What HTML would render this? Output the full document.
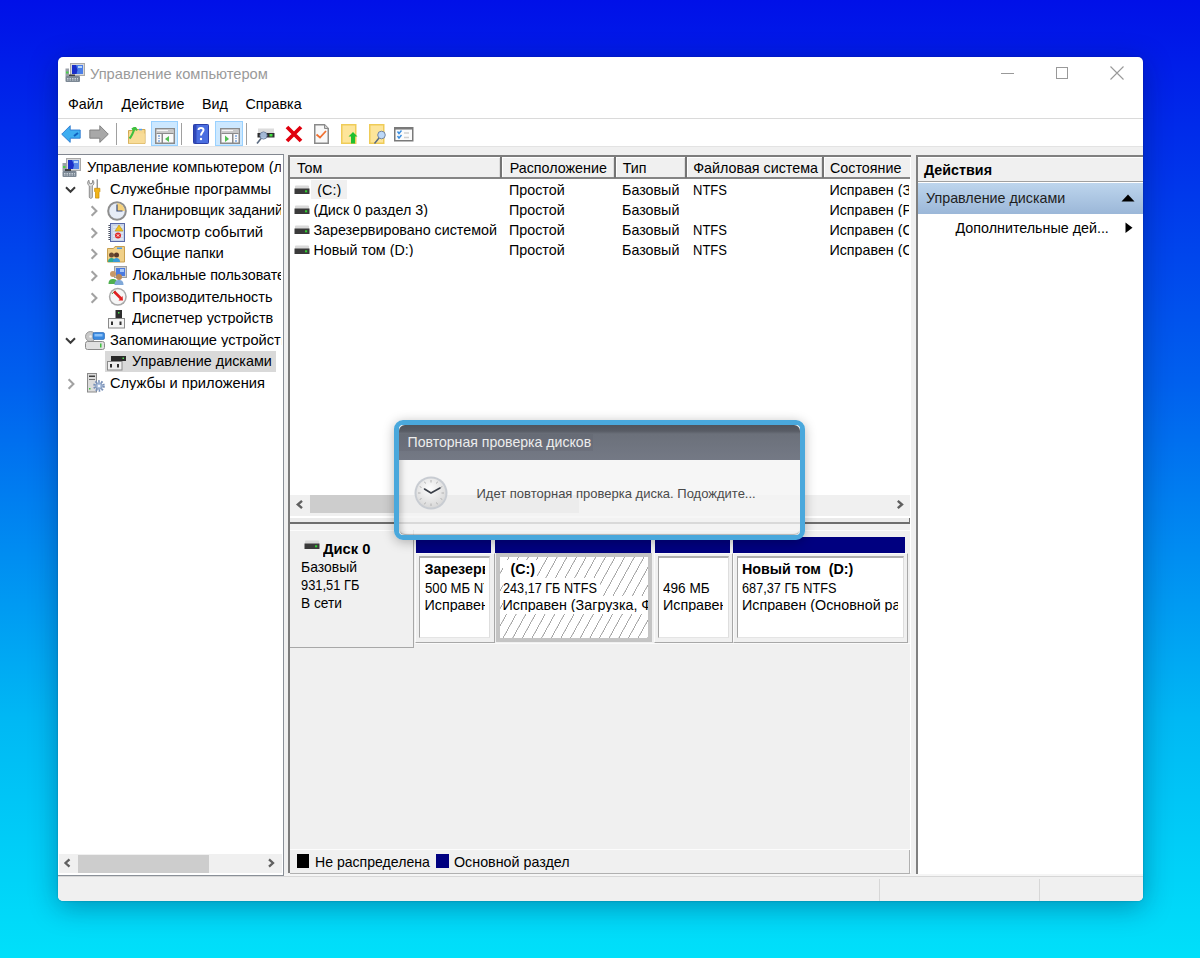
<!DOCTYPE html>
<html><head><meta charset="utf-8"><title>Управление компьютером</title>
<style>
html,body{margin:0;padding:0}
body{width:1200px;height:958px;position:relative;overflow:hidden;
background:linear-gradient(180deg,#0010e8 0%,#0060ee 40%,#00b8f4 75%,#00e0fa 100%);
font-family:"Liberation Sans",sans-serif;}
.a{position:absolute}
.t{position:absolute;white-space:nowrap}
</style></head><body>

<div class="a" style="left:58px;top:57px;width:1085px;height:844px;border-radius:5px;background:#fff;box-shadow:0 6px 28px rgba(0,20,60,.35),0 0 2px rgba(0,0,0,.25);overflow:hidden">
<div class="a" style="left:-58px;top:-57px;width:1200px;height:958px">
<div class="t" style="left:89.80px;top:66.70px;font-size:14.3px;line-height:14.3px;color:#9a9a9a;transform:scaleX(1.026);transform-origin:0 0;">Управление компьютером</div>
<div class="a" style="left:1001px;top:72.5px;width:12.5px;height:1px;background:#999;"></div>
<div class="a" style="left:1055.5px;top:66.5px;width:11.5px;height:11.5px;background:transparent;border:1px solid #999;box-sizing:border-box;width:12px;height:12px"></div>
<svg class="a" style="left:1109.5px;top:66px;" width="14" height="14" viewBox="0 0 14 14"><path d="M0.5 0.5L13.5 13.5M13.5 0.5L0.5 13.5" stroke="#999" stroke-width="1.1" fill="none"/></svg>
<div class="t" style="left:68.00px;top:97.40px;font-size:14.3px;line-height:14.3px;color:#000;">Файл</div>
<div class="t" style="left:121.50px;top:97.40px;font-size:14.3px;line-height:14.3px;color:#000;">Действие</div>
<div class="t" style="left:202.00px;top:97.40px;font-size:14.3px;line-height:14.3px;color:#000;">Вид</div>
<div class="t" style="left:245.50px;top:97.40px;font-size:14.3px;line-height:14.3px;color:#000;">Справка</div>
<div class="a" style="left:58px;top:118px;width:1085px;height:1px;background:#dadada;"></div>
<div class="a" style="left:58px;top:146px;width:1085px;height:1px;background:#e3e3e3;"></div>
<div class="a" style="left:58px;top:147px;width:1085px;height:729px;background:#f0f0f0;"></div>
<svg class="a" style="left:65px;top:63px;" width="20" height="20" viewBox="0 0 20 20">
<rect x="5.5" y="0.5" width="14" height="12" fill="#d8d8d8" stroke="#aaaaaa"/>
<rect x="7" y="2" width="11" height="9" fill="#4a7ee8"/>
<path d="M7 2h4l1.5 5l-1 4H7z" fill="#1a2fc8"/>
<rect x="13" y="3" width="4" height="2" fill="#b8d4f8"/>
<rect x="0.5" y="5.5" width="3.5" height="8" fill="#9aa0a8"/>
<rect x="1" y="8.5" width="2.5" height="2" fill="#4ad04a"/>
<rect x="4" y="11.5" width="6" height="2" fill="#404040"/>
<rect x="0.5" y="13" width="14.5" height="6" rx="1" fill="#7c8894"/>
<path d="M2 15.5h11M2 17h11" stroke="#c8d0d8" stroke-width="1" stroke-dasharray="1.5 1"/>
</svg>
<div class="a" style="left:150.5px;top:120.75px;width:27.5px;height:25px;background:#cce8ff;border:1px solid #99d1ff;box-sizing:border-box"></div>
<div class="a" style="left:215.25px;top:120.75px;width:27.5px;height:25px;background:#cce8ff;border:1px solid #99d1ff;box-sizing:border-box"></div>
<div class="a" style="left:116px;top:123px;width:1.2px;height:21.5px;background:#a0a0a0;"></div>
<div class="a" style="left:181px;top:123px;width:1.2px;height:21.5px;background:#a0a0a0;"></div>
<div class="a" style="left:245.5px;top:123px;width:1.2px;height:21.5px;background:#a0a0a0;"></div>
<svg class="a" style="left:61.2px;top:125px;" width="20" height="18" viewBox="0 0 20 18">
<path d="M0.7 9.2L9.2 0.7V5h10v8.2h-10v4.2Z" fill="#3eaef0" stroke="#2a78d0" stroke-width="0.9" stroke-linejoin="round"/>
<path d="M13 11l4-3" stroke="#1060c0" stroke-width="2"/>
</svg>
<svg class="a" style="left:89px;top:125px;" width="20" height="18" viewBox="0 0 20 18">
<path d="M19.3 9.2L10.8 0.7V5H0.8v8.2h10v4.2Z" fill="#a8a8a8" stroke="#7a7a7a" stroke-width="0.9" stroke-linejoin="round"/>
</svg>
<svg class="a" style="left:127.8px;top:126.5px;" width="18" height="17" viewBox="0 0 18 17">
<path d="M0.5 3.5h6l1-1h9.5v14h-16.5z" fill="#f6d890" stroke="#d0a850"/>
<rect x="0.8" y="6.5" width="16" height="10" fill="#f8dc98"/>
<path d="M1.5 11.5C4 9 5 6 6.5 1.5M4 2.5L7 0.5L9 3.5" stroke="#40c040" stroke-width="2.2" fill="none" stroke-linejoin="round"/>
<rect x="11" y="1.8" width="3" height="1.5" fill="#50a0f0"/>
</svg>
<svg class="a" style="left:155px;top:127.5px;" width="20" height="16" viewBox="0 0 20 16">
<rect x="0.75" y="0.75" width="18.5" height="14.5" fill="#fafafa" stroke="#8a8a8a" stroke-width="1.5"/>
<rect x="1.5" y="1.5" width="17" height="3.5" fill="#c8c8c8"/>
<path d="M2 2.6h11" stroke="#fff" stroke-width="0.9"/>
<rect x="1.5" y="5" width="17" height="1" fill="#8a8a8a"/>
<rect x="6.5" y="5" width="1.5" height="10" fill="#8a8a8a"/>
<rect x="3" y="7.5" width="2" height="1" fill="#3a7ad0"/><rect x="3" y="10" width="2" height="1" fill="#a0b8d8"/><rect x="3" y="12.5" width="2" height="1" fill="#3a7ad0"/>
<path d="M14 8L10 11L14 14Z" fill="#50c050"/>
</svg>
<svg class="a" style="left:192.5px;top:124px;" width="16" height="20" viewBox="0 0 16 20">
<rect x="0.5" y="0.5" width="15" height="19" rx="0.8" fill="#4a6ee0" stroke="#2a3ea8"/>
<rect x="1" y="1" width="2.5" height="18" fill="#3048b8"/>
<path d="M5.5 6C5.5 3.3 10.5 3.3 10.5 6C10.5 8 8 8.5 8 11.5" stroke="#fff" stroke-width="2" fill="none"/>
<circle cx="8" cy="15" r="1.2" fill="#fff"/>
</svg>
<svg class="a" style="left:220px;top:127.5px;" width="20" height="16" viewBox="0 0 20 16">
<rect x="0.75" y="0.75" width="18.5" height="14.5" fill="#fafafa" stroke="#8a8a8a" stroke-width="1.5"/>
<rect x="1.5" y="1.5" width="17" height="3.5" fill="#c8c8c8"/>
<path d="M2 2.6h11" stroke="#fff" stroke-width="0.9"/>
<rect x="1.5" y="5" width="17" height="1" fill="#8a8a8a"/>
<rect x="12" y="5" width="1.5" height="10" fill="#8a8a8a"/>
<rect x="15" y="7.5" width="2" height="1" fill="#3a7ad0"/><rect x="15" y="10" width="2" height="1" fill="#a0b8d8"/><rect x="15" y="12.5" width="2" height="1" fill="#3a7ad0"/>
<path d="M5 7.5L9 11L5 14Z" fill="#50c050"/>
</svg>
<svg class="a" style="left:256px;top:127.5px;" width="20" height="17" viewBox="0 0 20 17">
<rect x="2" y="0.5" width="16" height="4.5" fill="#dcdcdc"/>
<rect x="1.5" y="5" width="17" height="4.5" fill="#2e2e2e"/>
<rect x="13.5" y="6" width="3" height="2.5" fill="#40e040"/>
<circle cx="7.5" cy="7.5" r="3.6" fill="#b0c8e8" fill-opacity="0.9" stroke="#6a7a98" stroke-width="0.9"/>
<path d="M5 10.5L1 15.5" stroke="#5a6a80" stroke-width="1.6"/>
</svg>
<svg class="a" style="left:284.5px;top:125px;" width="18" height="18" viewBox="0 0 18 18">
<path d="M2 2L16 16M16 2L2 16" stroke="#e0000e" stroke-width="3.8"/>
</svg>
<svg class="a" style="left:314px;top:124px;" width="15" height="20" viewBox="0 0 15 20">
<path d="M0.75 0.75H10.5L14.25 4.5V19.25H0.75Z" fill="#f8f8f8" stroke="#8a8a8a" stroke-width="1.5"/>
<path d="M10.5 0.75V4.5H14.25" fill="#d0d0d0" stroke="#8a8a8a" stroke-width="1"/>
<path d="M2.5 10.5L6 13.5L12 7" stroke="#f07030" stroke-width="1.8" fill="none"/>
</svg>
<svg class="a" style="left:341px;top:124px;" width="17" height="20" viewBox="0 0 17 20">
<rect x="0.75" y="0.75" width="14" height="18.5" fill="#fde59a" stroke="#efcc58" stroke-width="1.5"/>
<path d="M12 8L16.5 12.5H14v7H10v-7H7.5Z" fill="#20c030"/>
</svg>
<svg class="a" style="left:369px;top:124px;" width="18" height="20" viewBox="0 0 18 20">
<rect x="0.75" y="0.75" width="14" height="18.5" fill="#fde59a" stroke="#efcc58" stroke-width="1.5"/>
<circle cx="12.5" cy="11" r="3.8" fill="#bcd8f8" stroke="#6a7a98" stroke-width="0.9"/>
<path d="M10 14L5.5 19.5" stroke="#5a6a80" stroke-width="1.5"/>
</svg>
<svg class="a" style="left:394.25px;top:126.5px;" width="20" height="15" viewBox="0 0 20 15">
<rect x="0.75" y="0.75" width="18" height="13" fill="#fbfbfb" stroke="#7a7a7a" stroke-width="1.5"/>
<rect x="0.75" y="0.75" width="18" height="1.8" fill="#7a7a7a"/>
<path d="M3.5 4.5L5 6.5L7.5 3.5M3.5 9L5 11L7.5 8" stroke="#3a8ee0" stroke-width="1.4" fill="none"/>
<path d="M10 6h5M10 10.5h5" stroke="#cfcfcf" stroke-width="1.3"/>
</svg>
<div class="a" style="left:58px;top:154px;width:226px;height:721.5px;background:#fff;border-top:1px solid #828790;border-right:1px solid #8a9098;border-bottom:1px solid #8a9098;box-sizing:border-box;"></div>
<div class="a" style="left:288px;top:154.5px;width:623px;height:718.5px;background:#fff;border-left:2px solid #7c7c7c;border-top:2px solid #7c7c7c;box-sizing:border-box;"></div>
<div class="a" style="left:916px;top:155px;width:227px;height:719px;background:#fff;border-left:2px solid #808080;border-top:2px solid #808080;box-sizing:border-box;"></div>
<div class="a" style="left:104.8px;top:351.4px;width:171.4px;height:21px;background:#d9d9d9;"></div>
<div class="t" style="left:87.00px;top:160.20px;font-size:14.3px;line-height:14.3px;color:#000;width:189.26829268292684px;overflow:hidden;transform:scaleX(1.025);transform-origin:0 0;">Управление компьютером (локальным)</div>
<div class="t" style="left:110.00px;top:181.77px;font-size:14.3px;line-height:14.3px;color:#000;width:165.85838991270612px;overflow:hidden;transform:scaleX(1.031);transform-origin:0 0;">Служебные программы</div>
<svg class="a" style="left:65.0px;top:186.26999999999998px;" width="12" height="8" viewBox="0 0 12 8"><path d="M1 1.3L5.5 5.8L10 1.3" stroke="#3a3a3a" stroke-width="2" fill="none"/></svg>
<div class="t" style="left:132.40px;top:203.34px;font-size:14.3px;line-height:14.3px;color:#000;width:148.6px;overflow:hidden;transform:scaleX(1.0);transform-origin:0 0;">Планировщик заданий</div>
<svg class="a" style="left:89.5px;top:205.33999999999997px;" width="9" height="12" viewBox="0 0 9 12"><path d="M1.6 1.2L6.4 6L1.6 10.8" stroke="#a2a2a2" stroke-width="2.1" fill="none"/></svg>
<div class="t" style="left:132.40px;top:224.91px;font-size:14.3px;line-height:14.3px;color:#000;width:142.20095693779905px;overflow:hidden;transform:scaleX(1.045);transform-origin:0 0;">Просмотр событий</div>
<svg class="a" style="left:89.5px;top:226.91px;" width="9" height="12" viewBox="0 0 9 12"><path d="M1.6 1.2L6.4 6L1.6 10.8" stroke="#a2a2a2" stroke-width="2.1" fill="none"/></svg>
<div class="t" style="left:132.40px;top:246.48px;font-size:14.3px;line-height:14.3px;color:#000;width:143.57487922705315px;overflow:hidden;transform:scaleX(1.035);transform-origin:0 0;">Общие папки</div>
<svg class="a" style="left:89.5px;top:248.48000000000002px;" width="9" height="12" viewBox="0 0 9 12"><path d="M1.6 1.2L6.4 6L1.6 10.8" stroke="#a2a2a2" stroke-width="2.1" fill="none"/></svg>
<div class="t" style="left:132.40px;top:268.05px;font-size:14.3px;line-height:14.3px;color:#000;width:148.6px;overflow:hidden;transform:scaleX(1.0);transform-origin:0 0;">Локальные пользователи и группы</div>
<svg class="a" style="left:89.5px;top:270.04999999999995px;" width="9" height="12" viewBox="0 0 9 12"><path d="M1.6 1.2L6.4 6L1.6 10.8" stroke="#a2a2a2" stroke-width="2.1" fill="none"/></svg>
<div class="t" style="left:132.40px;top:289.62px;font-size:14.3px;line-height:14.3px;color:#000;width:146.83794466403162px;overflow:hidden;transform:scaleX(1.012);transform-origin:0 0;">Производительность</div>
<svg class="a" style="left:89.5px;top:291.62px;" width="9" height="12" viewBox="0 0 9 12"><path d="M1.6 1.2L6.4 6L1.6 10.8" stroke="#a2a2a2" stroke-width="2.1" fill="none"/></svg>
<div class="t" style="left:132.40px;top:311.19px;font-size:14.3px;line-height:14.3px;color:#000;width:147.12871287128712px;overflow:hidden;transform:scaleX(1.01);transform-origin:0 0;">Диспетчер устройств</div>
<div class="t" style="left:110.00px;top:332.76px;font-size:14.3px;line-height:14.3px;color:#000;width:166.82926829268294px;overflow:hidden;transform:scaleX(1.025);transform-origin:0 0;">Запоминающие устройства</div>
<svg class="a" style="left:65.0px;top:337.26px;" width="12" height="8" viewBox="0 0 12 8"><path d="M1 1.3L5.5 5.8L10 1.3" stroke="#3a3a3a" stroke-width="2" fill="none"/></svg>
<div class="t" style="left:132.40px;top:354.33px;font-size:14.3px;line-height:14.3px;color:#000;width:148.00796812749005px;overflow:hidden;transform:scaleX(1.004);transform-origin:0 0;">Управление дисками</div>
<div class="t" style="left:110.00px;top:375.90px;font-size:14.3px;line-height:14.3px;color:#000;width:166.9921875px;overflow:hidden;transform:scaleX(1.024);transform-origin:0 0;">Службы и приложения</div>
<svg class="a" style="left:66.5px;top:377.9px;" width="9" height="12" viewBox="0 0 9 12"><path d="M1.6 1.2L6.4 6L1.6 10.8" stroke="#a2a2a2" stroke-width="2.1" fill="none"/></svg>
<div class="a" style="left:59px;top:854px;width:223px;height:19px;background:#f0f0f0;"></div>
<div class="a" style="left:78px;top:854.5px;width:131px;height:18px;background:#cdcdcd;"></div>
<svg class="a" style="left:63px;top:858px;" width="9" height="10" viewBox="0 0 9 10"><path d="M6.5 1.3L2.5 5L6.5 8.7" stroke="#606060" stroke-width="2.3" fill="none"/></svg>
<svg class="a" style="left:267px;top:858px;" width="9" height="10" viewBox="0 0 9 10"><path d="M2 1.3L6 5L2 8.7" stroke="#606060" stroke-width="2.3" fill="none"/></svg>
<div class="a" style="left:290px;top:157px;width:620px;height:21px;background:#f0f0f0;border-top:1px solid #fff;box-sizing:border-box"></div>
<div class="a" style="left:290px;top:177px;width:620px;height:2px;background:#858585;"></div>
<div class="a" style="left:499.2px;top:157.5px;width:1px;height:19.5px;background:#dcdcdc;"></div>
<div class="a" style="left:500.4px;top:157px;width:1.6px;height:20.5px;background:#747474;"></div>
<div class="a" style="left:502.2px;top:157.5px;width:1px;height:19.5px;background:#fdfdfd;"></div>
<div class="a" style="left:613.2px;top:157.5px;width:1px;height:19.5px;background:#dcdcdc;"></div>
<div class="a" style="left:614.4px;top:157px;width:1.6px;height:20.5px;background:#747474;"></div>
<div class="a" style="left:616.2px;top:157.5px;width:1px;height:19.5px;background:#fdfdfd;"></div>
<div class="a" style="left:684.2px;top:157.5px;width:1px;height:19.5px;background:#dcdcdc;"></div>
<div class="a" style="left:685.4px;top:157px;width:1.6px;height:20.5px;background:#747474;"></div>
<div class="a" style="left:687.2px;top:157.5px;width:1px;height:19.5px;background:#fdfdfd;"></div>
<div class="a" style="left:821.2px;top:157.5px;width:1px;height:19.5px;background:#dcdcdc;"></div>
<div class="a" style="left:822.4px;top:157px;width:1.6px;height:20.5px;background:#747474;"></div>
<div class="a" style="left:824.2px;top:157.5px;width:1px;height:19.5px;background:#fdfdfd;"></div>
<div class="t" style="left:297.00px;top:161.20px;font-size:14.3px;line-height:14.3px;color:#000;">Том</div>
<div class="t" style="left:509.70px;top:161.20px;font-size:14.3px;line-height:14.3px;color:#000;">Расположение</div>
<div class="t" style="left:622.70px;top:161.20px;font-size:14.3px;line-height:14.3px;color:#000;">Тип</div>
<div class="t" style="left:693.20px;top:161.20px;font-size:14.3px;line-height:14.3px;color:#000;">Файловая система</div>
<div class="t" style="left:830.00px;top:161.20px;font-size:14.3px;line-height:14.3px;color:#000;">Состояние</div>
<div class="a" style="left:311px;top:180px;width:36px;height:19px;background:#f0f0f0;"></div>
<div class="t" style="left:313.40px;top:183.20px;font-size:14.3px;line-height:14.3px;color:#000;width:186px;overflow:hidden;">&nbsp;(C:)</div>
<div class="t" style="left:509.00px;top:183.20px;font-size:14.3px;line-height:14.3px;color:#000;">Простой</div>
<div class="t" style="left:622.00px;top:183.20px;font-size:14.3px;line-height:14.3px;color:#000;">Базовый</div>
<div class="t" style="left:692.60px;top:183.20px;font-size:14.3px;line-height:14.3px;color:#000;transform:scaleX(0.91);transform-origin:0 0;">NTFS</div>
<div class="t" style="left:829.40px;top:183.20px;font-size:14.3px;line-height:14.3px;color:#000;width:80px;overflow:hidden;">Исправен (Загрузка, Файл подкачки)</div>
<div class="t" style="left:313.40px;top:203.20px;font-size:14.3px;line-height:14.3px;color:#000;width:186px;overflow:hidden;">(Диск 0 раздел 3)</div>
<div class="t" style="left:509.00px;top:203.20px;font-size:14.3px;line-height:14.3px;color:#000;">Простой</div>
<div class="t" style="left:622.00px;top:203.20px;font-size:14.3px;line-height:14.3px;color:#000;">Базовый</div>
<div class="t" style="left:829.40px;top:203.20px;font-size:14.3px;line-height:14.3px;color:#000;width:80px;overflow:hidden;">Исправен (Раздел восстановления)</div>
<div class="t" style="left:313.40px;top:223.20px;font-size:14.3px;line-height:14.3px;color:#000;width:186px;overflow:hidden;">Зарезервировано системой</div>
<div class="t" style="left:509.00px;top:223.20px;font-size:14.3px;line-height:14.3px;color:#000;">Простой</div>
<div class="t" style="left:622.00px;top:223.20px;font-size:14.3px;line-height:14.3px;color:#000;">Базовый</div>
<div class="t" style="left:692.60px;top:223.20px;font-size:14.3px;line-height:14.3px;color:#000;transform:scaleX(0.91);transform-origin:0 0;">NTFS</div>
<div class="t" style="left:829.40px;top:223.20px;font-size:14.3px;line-height:14.3px;color:#000;width:80px;overflow:hidden;">Исправен (Система, Активен)</div>
<div class="t" style="left:313.40px;top:243.20px;font-size:14.3px;line-height:14.3px;color:#000;width:186px;overflow:hidden;">Новый том (D:)</div>
<div class="t" style="left:509.00px;top:243.20px;font-size:14.3px;line-height:14.3px;color:#000;">Простой</div>
<div class="t" style="left:622.00px;top:243.20px;font-size:14.3px;line-height:14.3px;color:#000;">Базовый</div>
<div class="t" style="left:692.60px;top:243.20px;font-size:14.3px;line-height:14.3px;color:#000;transform:scaleX(0.91);transform-origin:0 0;">NTFS</div>
<div class="t" style="left:829.40px;top:243.20px;font-size:14.3px;line-height:14.3px;color:#000;width:80px;overflow:hidden;">Исправен (Основной раздел)</div>
<div class="a" style="left:290px;top:495px;width:620px;height:21px;background:#f0f0f0;"></div>
<div class="a" style="left:310px;top:495.2px;width:269px;height:17.6px;background:#cdcdcd;"></div>
<svg class="a" style="left:295px;top:499px;" width="9" height="11" viewBox="0 0 9 11"><path d="M7 1.8L2.8 5.5L7 9.2" stroke="#606060" stroke-width="2.4" fill="none"/></svg>
<svg class="a" style="left:896px;top:499px;" width="9" height="11" viewBox="0 0 9 11"><path d="M1.8 1.8L6 5.5L1.8 9.2" stroke="#606060" stroke-width="2.4" fill="none"/></svg>
<div class="a" style="left:290px;top:516px;width:620px;height:2px;background:#fff;"></div>
<div class="a" style="left:290px;top:518px;width:620px;height:4px;background:#ebebeb;"></div>
<div class="a" style="left:290px;top:522px;width:620px;height:1.5px;background:#6d6d6d;"></div>
<div class="a" style="left:909px;top:518px;width:1px;height:5px;background:#6d6d6d;"></div>
<div class="a" style="left:290px;top:523.5px;width:620px;height:350px;background:#f0f0f0;"></div>
<div class="a" style="left:290px;top:530px;width:620px;height:1px;background:#fcfcfc;"></div>
<div class="a" style="left:412.5px;top:530px;width:1px;height:118px;background:#a8a8a8;"></div>
<div class="a" style="left:290px;top:647px;width:123.5px;height:1px;background:#a8a8a8;"></div>
<div class="t" style="left:322.50px;top:542.10px;font-size:14.3px;line-height:14.3px;color:#000;font-weight:bold;transform:scaleX(1.03);transform-origin:0 0;">Диск 0</div>
<div class="t" style="left:300.50px;top:559.70px;font-size:14.3px;line-height:14.3px;color:#000;transform:scaleX(0.975);transform-origin:0 0;">Базовый</div>
<div class="t" style="left:300.50px;top:577.90px;font-size:14.3px;line-height:14.3px;color:#000;transform:scaleX(0.9);transform-origin:0 0;">931,51 ГБ</div>
<div class="t" style="left:300.50px;top:595.70px;font-size:14.3px;line-height:14.3px;color:#000;transform:scaleX(0.96);transform-origin:0 0;">В сети</div>
<div class="a" style="left:414.5px;top:536.5px;width:495px;height:107px;background:#f0f0f0;"></div>
<div class="a" style="left:414.5px;top:643px;width:495px;height:1px;background:#fafafa;"></div>
<div class="a" style="left:415.6px;top:537px;width:75.79999999999995px;height:16px;background:#000080;"></div>
<div class="a" style="left:495px;top:537px;width:156px;height:16px;background:#000080;"></div>
<div class="a" style="left:654.5px;top:537px;width:75.29999999999995px;height:16px;background:#000080;"></div>
<div class="a" style="left:733.3px;top:537px;width:172.20000000000005px;height:16px;background:#000080;"></div>
<div class="a" style="left:415px;top:553px;width:79.5px;height:90px;background:#f0f0f0;border-left:1px solid #fbfbfb;border-top:1px solid #fbfbfb;border-right:1.5px solid #a8a8a8;border-bottom:1.5px solid #a8a8a8;box-sizing:border-box"></div>
<div class="a" style="left:419px;top:556px;width:70.5px;height:81.5px;background:#fff;border-left:1.5px solid #a4a4a4;border-top:2px solid #b0b0b0;border-right:1px solid #dedede;border-bottom:1px solid #e4e4e4;box-sizing:border-box"></div>
<div class="a" style="left:495.5px;top:553px;width:156px;height:89px;background:#c4c4c4;"></div>
<div class="a" style="left:500px;top:557px;width:148px;height:80.5px;background:repeating-linear-gradient(118.8deg,#fff 0px,#fff 7.3px,#a8a8a8 7.6px,#a8a8a8 8.3px,#fff 8.45px);"></div>
<div class="a" style="left:653.5px;top:553px;width:79.5px;height:90px;background:#f0f0f0;border-left:1px solid #fbfbfb;border-top:1px solid #fbfbfb;border-right:1.5px solid #a8a8a8;border-bottom:1.5px solid #a8a8a8;box-sizing:border-box"></div>
<div class="a" style="left:658px;top:556px;width:70.5px;height:81.5px;background:#fff;border-left:1.5px solid #a4a4a4;border-top:2px solid #b0b0b0;border-right:1px solid #dedede;border-bottom:1px solid #e4e4e4;box-sizing:border-box"></div>
<div class="a" style="left:733px;top:553px;width:175px;height:90px;background:#f0f0f0;border-left:1px solid #fbfbfb;border-top:1px solid #fbfbfb;border-right:1.5px solid #a8a8a8;border-bottom:1.5px solid #a8a8a8;box-sizing:border-box"></div>
<div class="a" style="left:737px;top:556px;width:167px;height:81.5px;background:#fff;border-left:1.5px solid #a4a4a4;border-top:2px solid #b0b0b0;border-right:1px solid #dedede;border-bottom:1px solid #e4e4e4;box-sizing:border-box"></div>
<div class="t" style="left:424.50px;top:562.30px;font-size:14.3px;line-height:14.3px;color:#000;font-weight:bold;width:60px;overflow:hidden;">Зарезервировано системой</div>
<div class="t" style="left:424.50px;top:580.50px;font-size:14.3px;line-height:14.3px;color:#000;width:64.2px;overflow:hidden;transform:scaleX(0.92);transform-origin:0 0;">500 МБ NTFS</div>
<div class="t" style="left:424.50px;top:598.10px;font-size:14.3px;line-height:14.3px;color:#000;width:60px;overflow:hidden;">Исправен (Система, Активен)</div>
<div class="a" style="left:502.5px;top:560px;width:34px;height:18px;background:#fff;"></div>
<div class="a" style="left:502.5px;top:578px;width:97px;height:18px;background:#fff;"></div>
<div class="a" style="left:502.5px;top:596px;width:145.5px;height:17.5px;background:#fff;"></div>
<div class="t" style="left:502.50px;top:562.30px;font-size:14.3px;line-height:14.3px;color:#000;font-weight:bold;width:145px;overflow:hidden;">&nbsp; (C:)</div>
<div class="t" style="left:502.50px;top:580.50px;font-size:14.3px;line-height:14.3px;color:#000;transform:scaleX(0.886);transform-origin:0 0;">243,17 ГБ NTFS</div>
<div class="t" style="left:502.50px;top:598.10px;font-size:14.3px;line-height:14.3px;color:#000;width:145px;overflow:hidden;">Исправен (Загрузка, Файл подкачки)</div>
<div class="t" style="left:663.00px;top:580.50px;font-size:14.3px;line-height:14.3px;color:#000;transform:scaleX(0.95);transform-origin:0 0;">496 МБ</div>
<div class="t" style="left:663.00px;top:598.10px;font-size:14.3px;line-height:14.3px;color:#000;width:60px;overflow:hidden;">Исправен (Раздел восстановления)</div>
<div class="t" style="left:742.00px;top:562.30px;font-size:14.3px;line-height:14.3px;color:#000;font-weight:bold;width:156px;overflow:hidden;">Новый том&nbsp; (D:)</div>
<div class="t" style="left:742.00px;top:580.50px;font-size:14.3px;line-height:14.3px;color:#000;transform:scaleX(0.89);transform-origin:0 0;">687,37 ГБ NTFS</div>
<div class="t" style="left:742.00px;top:598.10px;font-size:14.3px;line-height:14.3px;color:#000;width:156px;overflow:hidden;">Исправен (Основной раздел)</div>
<div class="a" style="left:290px;top:849px;width:620px;height:1px;background:#fcfcfc;"></div>
<div class="a" style="left:290px;top:872.5px;width:620px;height:1px;background:#b0b0b0;"></div>
<div class="a" style="left:909px;top:850px;width:1px;height:23.5px;background:#b0b0b0;"></div>
<div class="a" style="left:296.5px;top:854px;width:12.5px;height:14px;background:#000;"></div>
<div class="t" style="left:314.50px;top:855.00px;font-size:14.3px;line-height:14.3px;color:#000;transform:scaleX(0.985);transform-origin:0 0;">Не распределена</div>
<div class="a" style="left:436px;top:854px;width:12.5px;height:14px;background:#000080;"></div>
<div class="t" style="left:454.00px;top:855.00px;font-size:14.3px;line-height:14.3px;color:#000;">Основной раздел</div>
<div class="a" style="left:918px;top:157px;width:225px;height:23.5px;background:#f0f0f0;border-top:1px solid #fff;box-sizing:border-box"></div>
<div class="a" style="left:918px;top:180.5px;width:225px;height:1px;background:#a0a0a0;"></div>
<div class="a" style="left:918px;top:182.5px;width:225px;height:31px;background:linear-gradient(#bdd5ed,#9bb7d8);"></div>
<div class="t" style="left:924.00px;top:162.90px;font-size:14.3px;line-height:14.3px;color:#000;font-weight:bold;">Действия</div>
<div class="t" style="left:926.00px;top:190.60px;font-size:14.3px;line-height:14.3px;color:#1e1e1e;">Управление дисками</div>
<svg class="a" style="left:1121px;top:194px;" width="14" height="8" viewBox="0 0 14 8"><path d="M0.5 7.5L7 0.5L13.5 7.5Z" fill="#000"/></svg>
<div class="t" style="left:955.50px;top:221.30px;font-size:14.3px;line-height:14.3px;color:#000;">Дополнительные дей...</div>
<svg class="a" style="left:1125px;top:221.5px;" width="8" height="11.5" viewBox="0 0 8 11.5"><path d="M0.5 0.5L7.5 5.75L0.5 11Z" fill="#000"/></svg>
<div class="a" style="left:393.5px;top:420px;width:411px;height:119.5px;border-radius:9px;border:5px solid #4aa8dc;box-sizing:border-box;box-shadow:0 2px 12px rgba(0,0,0,.28)"></div>
<div class="a" style="left:398.5px;top:425px;width:401px;height:109.5px;border-radius:6px;overflow:hidden;background:rgba(244,244,244,.8);box-shadow:inset 7px 0 6px -5px rgba(0,0,0,.22), inset 0 -2px 1px -1px rgba(0,0,0,.25)"><div class="a" style="left:0;top:0;width:401px;height:34.5px;background:linear-gradient(#50545c 0px,#585c65 6px,#6b707a 9px,#6f747f 20px,#747985 34.5px)"></div><div class="a" style="left:0;top:8.5px;width:194.5px;height:17px;background:rgba(40,44,52,.07)"></div></div>
<div class="t" style="left:407.50px;top:435.06px;font-size:14.1px;line-height:14.1px;color:#ececec;">Повторная проверка дисков</div>
<div class="t" style="left:476.50px;top:486.50px;font-size:13px;line-height:13px;color:#4a4a4a;">Идет повторная проверка диска. Подождите...</div>
<svg class="a" style="left:61.5px;top:157.7px;" width="20" height="20" viewBox="0 0 20 20">
<rect x="4.5" y="0.5" width="14" height="12" fill="#d8d8d8" stroke="#a8a8a8"/>
<rect x="6" y="2" width="11" height="9" fill="#5a8ae8"/>
<path d="M6 2h4l2 5l-1 4H6z" fill="#1a2fc8"/>
<rect x="12" y="3" width="4" height="2" fill="#b8d4f8"/>
<rect x="0.5" y="5" width="3.5" height="8" fill="#9aa0a8"/>
<rect x="1" y="8" width="2.5" height="2" fill="#4ad04a"/>
<rect x="3" y="11" width="6" height="2" fill="#404040"/>
<rect x="0.5" y="13" width="14" height="6" rx="1" fill="#7c8894"/>
<path d="M2 15.5h11M2 17h11" stroke="#c8d0d8" stroke-width="1" stroke-dasharray="1.5 1"/>
</svg>
<svg class="a" style="left:87px;top:179.26999999999998px;" width="14" height="20" viewBox="0 0 14 20">
<path d="M1.8 1.2C0.2 2.8 0.3 5.8 2.3 6.8L2.3 18.2C2.3 19.6 5.3 19.6 5.3 18.2L5.3 6.8C7.3 5.8 7.4 2.8 5.8 1.2L5.2 4.3L3.8 4.8L2.4 4.3Z" fill="#e0e0e0" stroke="#7e7e7e" stroke-width="0.9"/>
<path d="M3.8 7v11" stroke="#b0b0b0" stroke-width="0.8"/>
<rect x="9.6" y="0.3" width="1.3" height="9.5" fill="#8a8a8a"/>
<path d="M7.6 9.3h5.3v3.2l-0.9 1v5.6h-3.5v-5.6l-0.9-1z" fill="#f2b418" stroke="#c48a08" stroke-width="0.7"/>
</svg>
<svg class="a" style="left:106.8px;top:200.83999999999997px;" width="20" height="20" viewBox="0 0 20 20">
<circle cx="10" cy="10" r="9.8" fill="#8e8e8e"/>
<circle cx="10" cy="10" r="7.8" fill="#e6ecf6"/>
<path d="M10 10V2.2A7.8 7.8 0 0 1 17.8 10Z" fill="#f6d27c"/>
<path d="M10 3.5v6.5h5.5" stroke="#3a4a78" stroke-width="1.2" fill="none"/>
</svg>
<svg class="a" style="left:107.5px;top:222.91px;" width="17" height="19" viewBox="0 0 17 19">
<rect x="2.5" y="0.5" width="14" height="18" fill="#c8d4e8" stroke="#5a6aa8"/>
<path d="M5 4h10M5 7h10M5 10h10M5 13h10M5 16h10" stroke="#f4f6fa" stroke-width="1"/>
<path d="M1.2 2v15" stroke="#404858" stroke-width="1.5" stroke-dasharray="1 1"/>
<path d="M11 2L15 8H7Z" fill="#f0c020" stroke="#b89010" stroke-width="0.6"/>
<circle cx="10" cy="12.5" r="3" fill="#e02828"/>
<path d="M8.8 11.3l2.4 2.4M11.2 11.3l-2.4 2.4" stroke="#fff" stroke-width="0.9"/>
</svg>
<svg class="a" style="left:106.5px;top:244.98000000000002px;" width="18" height="18" viewBox="0 0 18 18">
<path d="M0.5 3.5h6l1.5-2h9.5v15.5h-17z" fill="#f0d088" stroke="#c8a050"/>
<rect x="10" y="2.5" width="5" height="1.5" fill="#4a9ae8"/>
<circle cx="4.5" cy="10" r="2.5" fill="#6a4a30"/>
<path d="M1 17c0-3 1.5-4 3.5-4s3.5 1 3.5 4z" fill="#30a890"/>
<circle cx="9.5" cy="10" r="2.5" fill="#5a3a28"/>
<path d="M6 17c0-3 1.5-4 3.5-4s3.5 1 3.5 4z" fill="#3a9ad8"/>
</svg>
<svg class="a" style="left:107.5px;top:266.04999999999995px;" width="19" height="19" viewBox="0 0 19 19">
<rect x="6.5" y="0.5" width="12" height="11" fill="#d0d0d0" stroke="#a0a0a0"/>
<rect x="8" y="2" width="9" height="8" fill="#4a7ae0"/>
<rect x="12" y="3" width="4" height="3" fill="#a8c8f8"/>
<circle cx="5" cy="8" r="3" fill="#c89868"/>
<path d="M0.5 18c0-4 2-5 4.5-5s4.5 1 4.5 5z" fill="#50b050"/>
<circle cx="11" cy="11" r="3" fill="#b88858"/>
<path d="M6.5 19c0-4 2-5 4.5-5s4.5 1 4.5 5z" fill="#80a8d8"/>
</svg>
<svg class="a" style="left:107.5px;top:287.12px;" width="20" height="20" viewBox="0 0 20 20">
<circle cx="9.8" cy="9.8" r="9" fill="#a8a8a8"/>
<circle cx="9.8" cy="9.8" r="7.5" fill="#f6f6f6"/>
<path d="M4 7A6 6 0 0 1 8 4" stroke="#50a050" stroke-width="1" fill="none"/>
<path d="M6 4.5L13 11.5" stroke="#e02020" stroke-width="2.6"/>
<path d="M10.5 13.5L15 13.5L14.5 9Z" fill="#e02020"/>
</svg>
<svg class="a" style="left:108px;top:308.69px;" width="17" height="20" viewBox="0 0 17 20">
<rect x="7.5" y="1" width="6.5" height="8.5" fill="#2e2e2e"/>
<rect x="10" y="3" width="1.5" height="1.5" fill="#50e050"/>
<rect x="0.5" y="9.5" width="16" height="9.5" fill="#f4f4f4" stroke="#8a8a8a"/>
<rect x="3" y="12.5" width="2" height="3.5" fill="#303030"/>
<rect x="11.5" y="12.5" width="2" height="3.5" fill="#303030"/>
</svg>
<svg class="a" style="left:84.5px;top:330.76px;" width="20" height="19" viewBox="0 0 20 19">
<circle cx="5.5" cy="5.5" r="5" fill="#c8c8c8" stroke="#8a8a8a" stroke-width="0.8"/>
<circle cx="5.5" cy="5.5" r="1.3" fill="#f0f0f0"/>
<rect x="8" y="1.5" width="11.5" height="7" rx="1.5" fill="#3a8ae0" stroke="#2060b0" stroke-width="0.6"/>
<rect x="9.5" y="3" width="8" height="2.5" fill="#8ac0f8"/>
<rect x="0.5" y="10.5" width="19" height="8" rx="2" fill="#e0e0e0" stroke="#8a8a8a"/>
<rect x="15" y="12.5" width="1.5" height="4" fill="#40c040"/>
</svg>
<svg class="a" style="left:106.8px;top:352.83px;" width="20" height="18" viewBox="0 0 20 18">
<rect x="4" y="0.5" width="15" height="3" fill="#d8d8d8"/>
<rect x="4" y="3" width="15" height="5" fill="#2a2a2a"/>
<rect x="15.5" y="4.5" width="1.5" height="1.5" fill="#50e050"/>
<rect x="0.5" y="8.5" width="14.5" height="8.5" fill="#f0f0f0" stroke="#8a8a8a"/>
<rect x="3" y="11" width="2" height="3.5" fill="#303030"/>
<rect x="10" y="11" width="2" height="3.5" fill="#303030"/>
</svg>
<svg class="a" style="left:87.2px;top:373.4px;" width="18" height="20" viewBox="0 0 18 20">
<rect x="0.5" y="0.5" width="9" height="18.5" fill="#dcdcdc" stroke="#8a8a8a"/>
<rect x="2" y="2.5" width="6" height="1.5" fill="#404040"/>
<rect x="2" y="6" width="6" height="1" fill="#707070"/>
<rect x="2" y="15" width="1.5" height="1.5" fill="#40c040"/>
<circle cx="12" cy="13" r="4.6" fill="none" stroke="#7890b8" stroke-width="2.4" stroke-dasharray="1.6 1.3"/>
<circle cx="12" cy="13" r="3.3" fill="#a8bcd8" stroke="#7890b8" stroke-width="0.8"/>
<circle cx="12" cy="13" r="1.3" fill="#f4f8ff"/>
</svg>
<svg class="a" style="left:294px;top:184.5px;" width="16" height="10" viewBox="0 0 16 10">
<rect x="1" y="0.5" width="14" height="4" rx="1" fill="#dadada"/>
<rect x="0.5" y="3.5" width="15" height="5.5" fill="#3a3a3a"/>
<rect x="11" y="5.3" width="2.2" height="2" fill="#30d030"/>
</svg>
<svg class="a" style="left:294px;top:204.5px;" width="16" height="10" viewBox="0 0 16 10">
<rect x="1" y="0.5" width="14" height="4" rx="1" fill="#dadada"/>
<rect x="0.5" y="3.5" width="15" height="5.5" fill="#3a3a3a"/>
<rect x="11" y="5.3" width="2.2" height="2" fill="#30d030"/>
</svg>
<svg class="a" style="left:294px;top:224.5px;" width="16" height="10" viewBox="0 0 16 10">
<rect x="1" y="0.5" width="14" height="4" rx="1" fill="#dadada"/>
<rect x="0.5" y="3.5" width="15" height="5.5" fill="#3a3a3a"/>
<rect x="11" y="5.3" width="2.2" height="2" fill="#30d030"/>
</svg>
<svg class="a" style="left:294px;top:244.5px;" width="16" height="10" viewBox="0 0 16 10">
<rect x="1" y="0.5" width="14" height="4" rx="1" fill="#dadada"/>
<rect x="0.5" y="3.5" width="15" height="5.5" fill="#3a3a3a"/>
<rect x="11" y="5.3" width="2.2" height="2" fill="#30d030"/>
</svg>
<svg class="a" style="left:303.6px;top:540px;" width="16" height="10" viewBox="0 0 16 10">
<rect x="1" y="0.5" width="14" height="4" rx="1" fill="#dadada"/>
<rect x="0.5" y="3.5" width="15" height="5.5" fill="#3a3a3a"/>
<rect x="11" y="5.3" width="2.2" height="2" fill="#30d030"/>
</svg>
<svg class="a" style="left:413.5px;top:475.5px;" width="34" height="34" viewBox="0 0 34 34">
<defs><radialGradient id="cg" cx="0.45" cy="0.35" r="0.7"><stop offset="0" stop-color="#fdfdfd"/><stop offset="1" stop-color="#d6d6d6"/></radialGradient></defs>
<circle cx="17" cy="17" r="16.5" fill="#c8ccd2"/>
<circle cx="17" cy="17" r="14.5" fill="url(#cg)"/>
<path d="M17 4v2.5M17 27.5V30M4 17h2.5M27.5 17H30M10.5 5.7l1 1.8M23.5 5.7l-1 1.8M5.7 10.5l1.8 1M5.7 23.5l1.8-1M28.3 10.5l-1.8 1M28.3 23.5l-1.8-1M10.5 28.3l1-1.8M23.5 28.3l-1-1.8" stroke="#b0b0b0" stroke-width="1"/>
<path d="M10.5 13L17 17L26 12" stroke="#3a3f48" stroke-width="1.6" fill="none" stroke-linecap="round"/>
</svg>
<div class="a" style="left:284px;top:873.5px;width:859px;height:2.5px;background:#f5f5f5;"></div>
<div class="a" style="left:58px;top:876px;width:1085px;height:1px;background:#d7d7d7;"></div>
<div class="a" style="left:58px;top:877px;width:1085px;height:24px;background:#f0f0f0;"></div>
<div class="a" style="left:879px;top:879px;width:1px;height:22px;background:#d7d7d7;"></div>
<div class="a" style="left:1039px;top:879px;width:1px;height:22px;background:#d7d7d7;"></div>
</div></div>
</body></html>
